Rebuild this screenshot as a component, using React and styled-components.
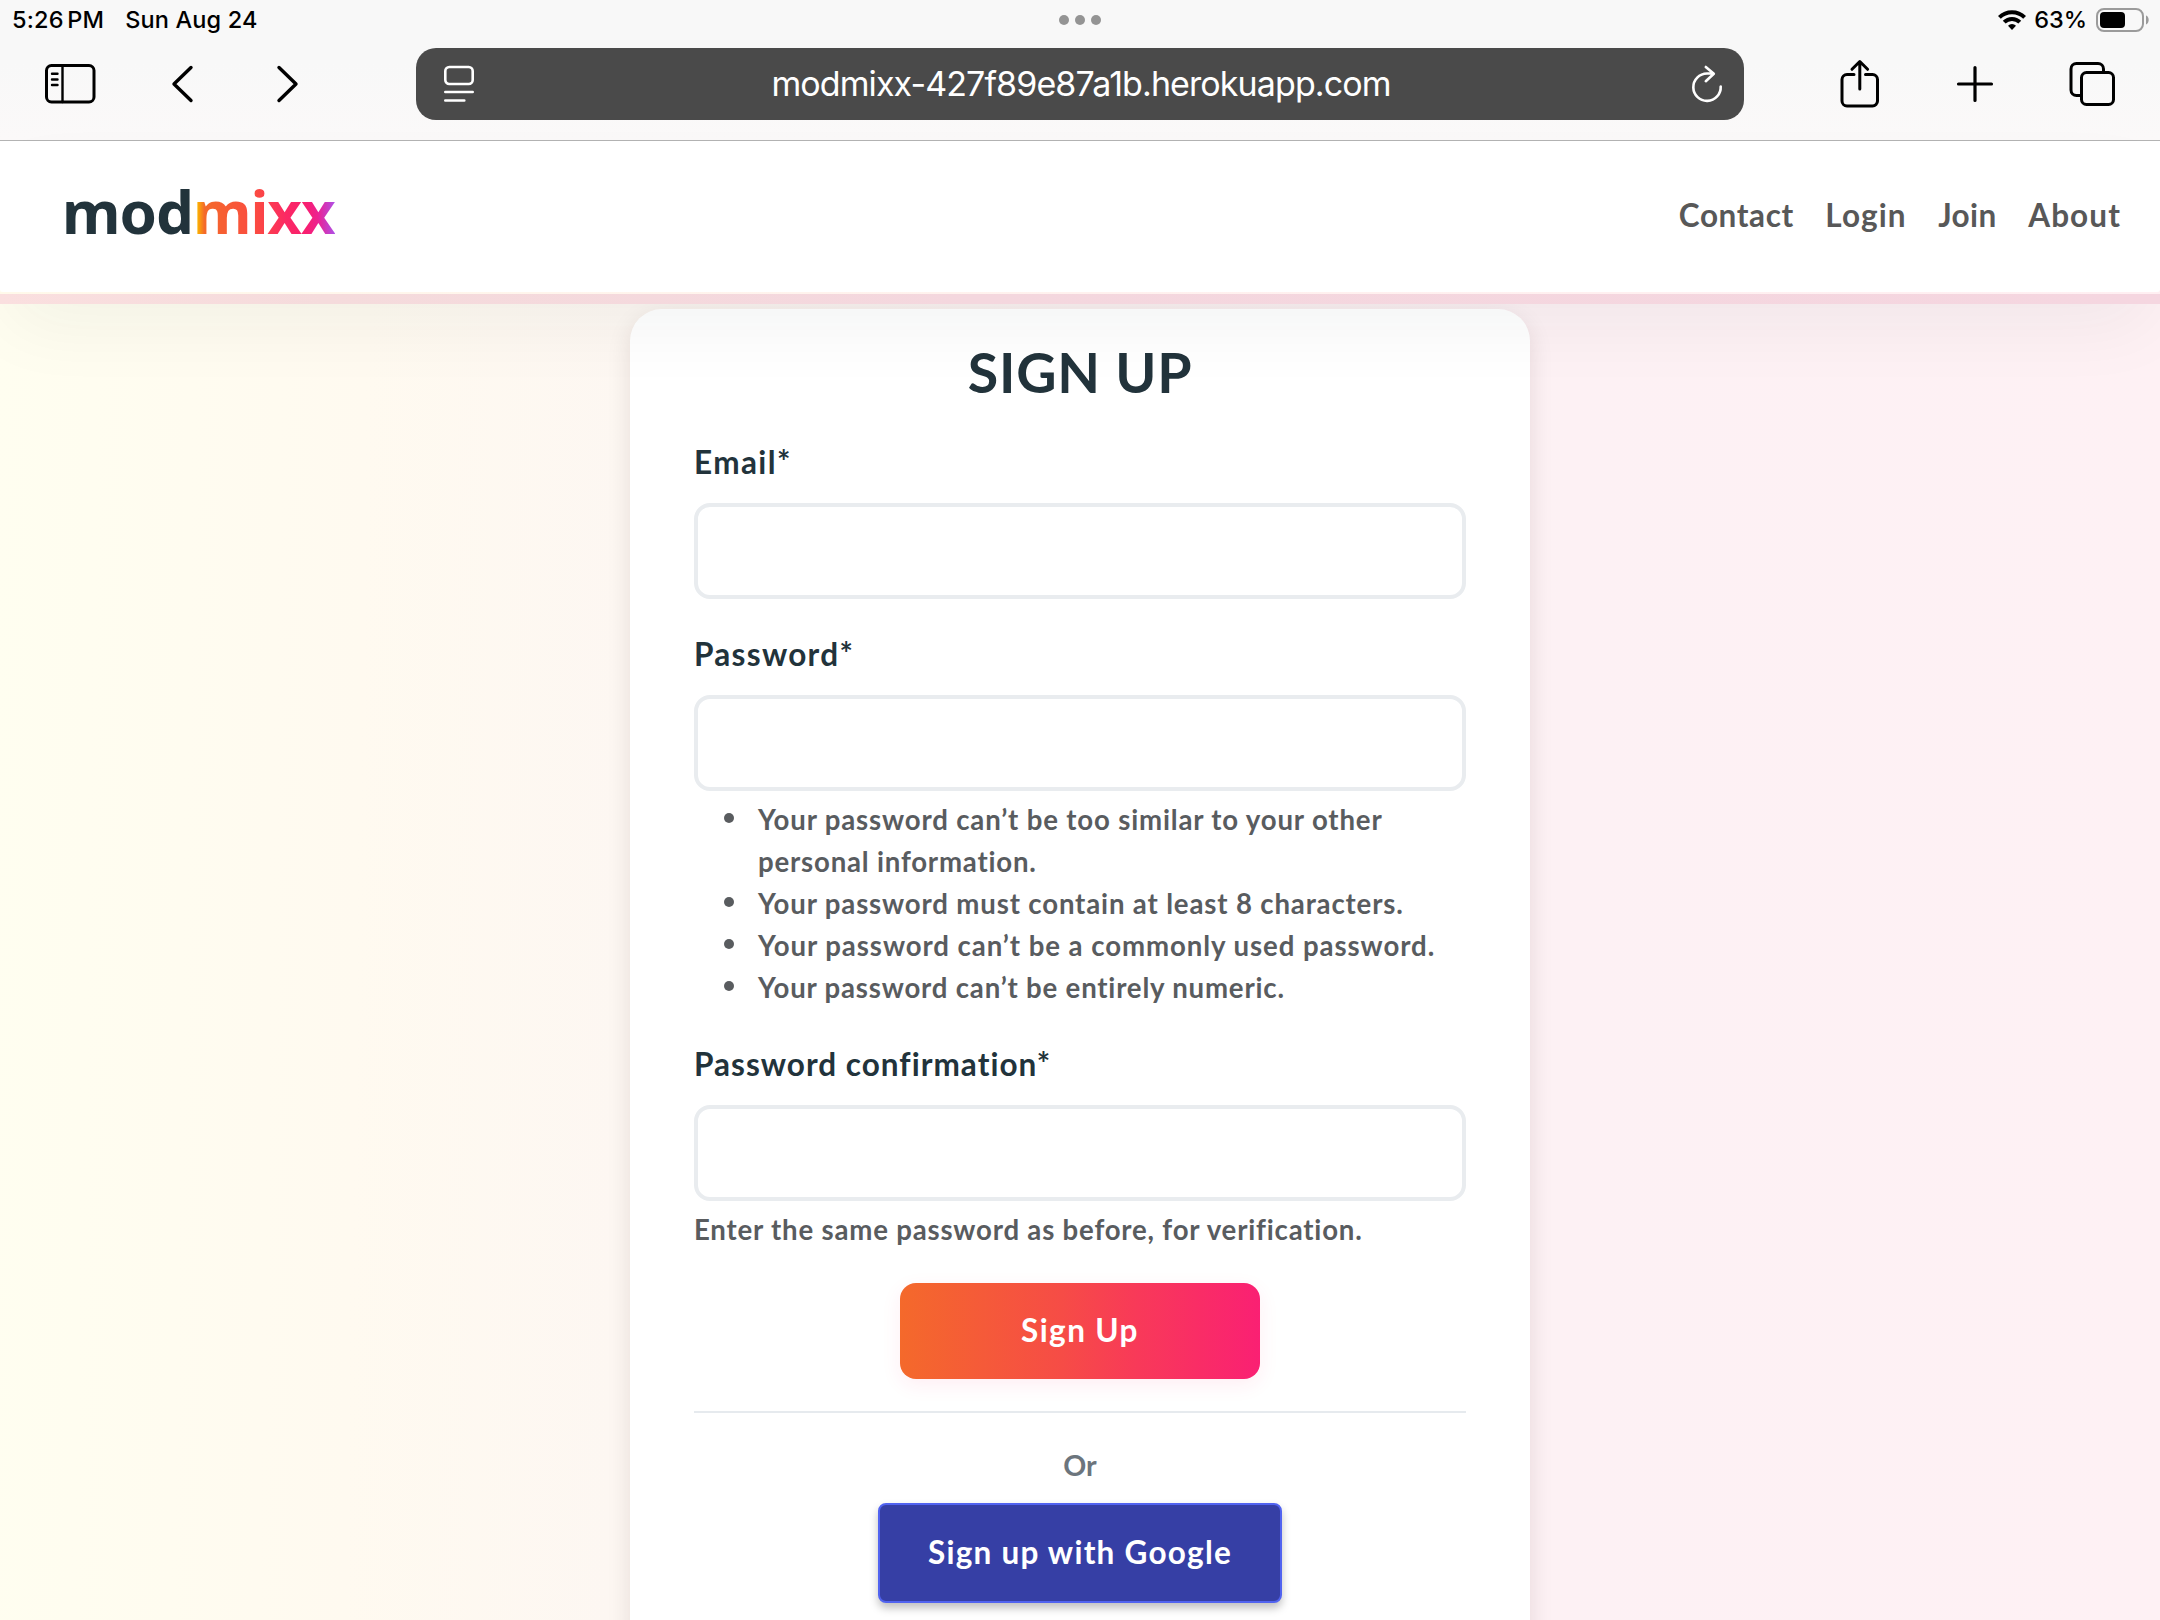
import React from "react";
import styled, { createGlobalStyle } from "styled-components";

const Global = createGlobalStyle`
  *, *::before, *::after { box-sizing: border-box; }
  html, body { margin: 0; padding: 0; overflow: hidden; }
  body { font-family: Lato, "Open Sans", sans-serif; background: #fff5f2; }
  input, button { font: inherit; }
`;

const Screen = styled.div`
  width: 2160px;
  height: 1620px;
  overflow: hidden;
  display: flex;
  flex-direction: column;
  background: linear-gradient(91deg, #fffef0 0%, #fffcf0 9%, #fffaf0 17%, #fdf7f2 29%, #fdf3f3 50%, #fdf1f4 72%, #fef1f4 100%);
`;

const Chrome = styled.header`
  flex: none;
  height: 141px;
  border-bottom: 1px solid #b3b3b3;
  background: linear-gradient(180deg, #f8f8f8 0%, #f8f8f8 45%, #fbf9f9 100%);
  font-family: Inter, sans-serif;
  color: #000;
`;

const StatusBar = styled.div`
  height: 40px;
  display: grid;
  grid-template-columns: 1fr auto 1fr;
  align-items: center;
  padding: 0 10px 0 10px;
  font-size: 23.5px;
  font-weight: 500;
  line-height: 40px;
`;

const StatusSide = styled.div`
  display: flex;
  align-items: center;
  justify-content: ${(p) => (p.$end ? "flex-end" : "flex-start")};
  padding-left: 2px;
  white-space: pre;
`;

const StatusText = styled.span`
  letter-spacing: ${(p) => p.$track || 0}px;
  word-spacing: ${(p) => p.$word || 0}px;
  margin-right: ${(p) => p.$gap || 0}px;
`;

const Dots = styled.div`
  display: flex;
  gap: 5.5px;
`;

const Dot = styled.i`
  width: 10.5px;
  height: 10.5px;
  border-radius: 50%;
  background: #949494;
`;

const Toolbar = styled.div`
  height: 88px;
  display: flex;
  align-items: center;
  padding: 0 44px;
`;

const ToolGroup = styled.div`
  display: flex;
  align-items: center;
  width: ${(p) => p.$w}px;
  justify-content: ${(p) => (p.$end ? "flex-end" : "flex-start")};
`;

const Icon = styled.svg`
  display: block;
  flex: none;
  fill: none;
  stroke: currentColor;
  stroke-linecap: ${(p) => (p.$butt ? "butt" : "round")};
  stroke-linejoin: round;
  stroke-width: ${(p) => p.$sw || 3};
  margin-left: ${(p) => p.$ml || 0}px;
  margin-right: ${(p) => p.$mr || 0}px;
`;

const AddressBar = styled.div`
  width: 1328px;
  height: 72px;
  border-radius: 20px;
  background: #4a4a4a;
  color: #fff;
  display: grid;
  grid-template-columns: 56px 1fr 56px;
  align-items: center;
`;

const Address = styled.span`
  padding-left: 2px;
  text-align: center;
  font-size: 34px;
  line-height: 72px;
  letter-spacing: ${(p) => p.$track}px;
`;

const Nav = styled.nav`
  position: relative;
  z-index: 2;
  flex: none;
  height: 163px;
  box-shadow: 0 32px 72px -10px rgba(20, 30, 34, 0.05);
`;

const NavBody = styled.div`
  height: 151px;
  background: #fff;
  border-radius: 0 0 3px 3px;
  display: flex;
  justify-content: space-between;
  padding: 0 39px 0 62px;
`;

const NavSeam = styled.div`
  height: 2px;
  background: linear-gradient(90deg, #fff9ea, #fff1ee 50%, #ffeff2);
`;

const NavRule = styled.div`
  height: 10px;
  background: linear-gradient(90deg, #fadfdf 0%, #f5dbdc 15%, #f4d7de 45%, #f5d6e0 100%);
`;

const Logo = styled.div`
  font-family: "Noto Sans", sans-serif;
  font-weight: 700;
  font-size: 60px;
  line-height: 82px;
  padding-top: 29px;
  letter-spacing: ${(p) => p.$track}px;
  color: #22333b;
`;

const LogoAccent = styled.span`
  display: inline-block;
  line-height: 82px;
  color: transparent;
  background: linear-gradient(90deg, #fbb400 3%, #f46a2a 8%, #fb4a42 45%, #fb2864 66%, #f81f70 80%, #ec2192 88%, #a855f0 101%);
  background-clip: text;
  -webkit-background-clip: text;
`;

const Links = styled.div`
  display: flex;
  gap: 31.5px;
  padding-top: 50px;
`;

const Link = styled.a`
  font-weight: 700;
  font-size: 31.5px;
  line-height: 48px;
  color: #585858;
  letter-spacing: ${(p) => p.$track}px;
`;

const Main = styled.main`
  flex: 1;
  min-height: 0;
  display: flex;
  justify-content: center;
  align-items: flex-start;
  padding-top: 5px;
`;

const Card = styled.form`
  flex: none;
  width: 900px;
  height: 1400px;
  padding: 33px 64px 0;
  background: #fff;
  border-radius: 32px;
  box-shadow: 0 8px 24px rgba(50, 20, 0, 0.11);
  display: flex;
  flex-direction: column;
`;

const Title = styled.h1`
  margin: 0 0 31px;
  text-align: center;
  font-weight: 700;
  font-size: 55.5px;
  line-height: 60px;
  color: #22333b;
  letter-spacing: ${(p) => p.$track}px;
`;

const Field = styled.div`
  display: flex;
  flex-direction: column;
  height: ${(p) => p.$h}px;
`;

const Label = styled.label`
  height: 70px;
  padding-top: 5px;
  font-weight: 700;
  font-size: 31.5px;
  line-height: 48px;
  color: #22333b;
  letter-spacing: ${(p) => p.$track}px;
`;

const Input = styled.input`
  width: 100%;
  height: 96px;
  border: 4px solid #e9ecef;
  border-radius: 16px;
  background: #fff;
  outline: none;
`;

const Help = styled.div`
  margin-top: 8px;
  font-weight: 700;
  font-size: 27.6px;
  line-height: 42px;
  color: #595c5f;
  white-space: nowrap;
  letter-spacing: ${(p) => p.$track}px;
`;

const Rules = styled.ul`
  margin: 8px 0 0;
  padding: 0;
  list-style: none;
`;

const Rule = styled.li`
  display: grid;
  grid-template-columns: 30px 1fr;
  padding-left: 30px;
  column-gap: 4px;
`;

const Bullet = styled.i`
  width: 10px;
  height: 10px;
  margin-top: 14px;
  border-radius: 50%;
  background: #595c5f;
`;

const RuleText = styled(Help)`
  margin-top: 0;
`;

const Submit = styled.button`
  align-self: center;
  width: 360px;
  height: 96px;
  padding: 0 0 2px;
  border: 0;
  border-radius: 16px;
  background: linear-gradient(90deg, #f4692b, #f64c46 45%, #f83a58 65%, #fa2073);
  color: #fff;
  font-weight: 700;
  font-size: 31.5px;
  letter-spacing: ${(p) => p.$track}px;
  box-shadow: 0 6px 20px rgba(251, 32, 100, 0.08);
`;

const Divider = styled.hr`
  width: 100%;
  height: 2px;
  margin: 32px 0 30px;
  border: 0;
  background: #e6eaee;
`;

const Or = styled.p`
  margin: 0 0 16px;
  text-align: center;
  font-weight: 700;
  font-size: 28.5px;
  line-height: 44px;
  color: #6c757d;
  letter-spacing: ${(p) => p.$track}px;
`;

const GoogleButton = styled.button`
  align-self: center;
  width: 404px;
  height: 100px;
  padding: 0 0 2px;
  border: 2px solid #5163f0;
  border-radius: 8px;
  background: #363fa5;
  color: #fff;
  font-weight: 700;
  font-size: 31.5px;
  letter-spacing: ${(p) => p.$track}px;
  box-shadow: 0 5px 9px rgba(0, 0, 0, 0.25);
`;

const links = [
  ["Contact", 0.6],
  ["Login", 1.1],
  ["Join", 0.4],
  ["About", 1.1],
];

const rules = [
  [["Your password can’t be too similar to your other", 0.83], ["personal information.", 0.8]],
  [["Your password must contain at least 8 characters.", 0.84]],
  [["Your password can’t be a commonly used password.", 0.93]],
  [["Your password can’t be entirely numeric.", 0.8]],
];

function WifiIcon() {
  return (
    <Icon width="28" height="20" viewBox="0 0 28 20" $sw={4} $mr={8} $butt>
      <path d="M1.400 7.400a18 18 0 0 1 25.200 0" />
      <path d="M6.200 12.200a11 11 0 0 1 15.600 0" />
      <path d="M14 20l-4-4.200a5.600 5.600 0 0 1 8 0z" fill="currentColor" stroke="none" />
    </Icon>
  );
}

function BatteryIcon() {
  return (
    <Icon width="54" height="24" viewBox="0 0 54 24" $sw={2} $ml={9}>
      <rect x="1" y="1" width="46" height="22" rx="7" stroke="#9b9b9b" />
      <rect x="4" y="4" width="25" height="16" rx="4" fill="#000" stroke="none" />
      <path d="M50 7.600c3.600 1 3.600 7.800 0 8.800z" fill="#9b9b9b" stroke="none" />
    </Icon>
  );
}

export default function App() {
  return (
    <Screen>
      <Global />
      <Chrome>
        <StatusBar>
          <StatusSide>
            <StatusText $track={0.2} $word={-3} $gap={21}>5:26 PM</StatusText>
            <StatusText $track={0.15}>Sun Aug 24</StatusText>
          </StatusSide>
          <Dots><Dot /><Dot /><Dot /></Dots>
          <StatusSide $end>
            <WifiIcon />
            <StatusText>63%</StatusText>
            <BatteryIcon />
          </StatusSide>
        </StatusBar>
        <Toolbar>
          <ToolGroup $w={372}>
            <Icon width="52" height="42" viewBox="0 0 52 42" $sw={3}>
              <rect x="2.500" y="2.500" width="47.500" height="36.500" rx="5" />
              <path d="M18.500 3v36M8 10.800h5.500M8 16.500h5.500M8 22h5.500" strokeWidth="2.400" />
            </Icon>
            <Icon width="24" height="40" viewBox="0 0 24 40" $sw={3.4} $ml={75}>
              <path d="M20 3.500L3 20l17 16.500" />
            </Icon>
            <Icon width="24" height="40" viewBox="0 0 24 40" $sw={3.4} $ml={80}>
              <path d="M4 3.500L21 20 4 36.500" />
            </Icon>
          </ToolGroup>
          <AddressBar>
            <Icon width="32" height="38" viewBox="0 0 32 38" $sw={2.6} $ml={27}>
              <rect x="2.300" y="2" width="27.400" height="17" rx="4" />
              <path d="M2.300 27h27.400M2.300 35.500h19" />
            </Icon>
            <Address $track={-0.9}>modmixx-427f89e87a1b.herokuapp.com</Address>
            <Icon width="32" height="38" viewBox="0 0 32 38" $sw={2.6} $ml={3}>
              <path d="M29.700 21.500A13.700 13.700 0 1 1 16 8.500h6.500M14.800 2l8 6.800-8 7.400" />
            </Icon>
          </AddressBar>
          <ToolGroup $w={372} $end>
            <Icon width="40" height="50" viewBox="0 0 40 50" $sw={3} $mr={75.5}>
              <path d="M14 15.500H7a5 5 0 0 0-5 5v21.500a5 5 0 0 0 5 5h25.500a5 5 0 0 0 5-5V20.500a5 5 0 0 0-5-5h-7" />
              <path d="M19.800 30V3M12 10.300L19.800 2.500l7.800 7.800" />
            </Icon>
            <Icon width="38" height="38" viewBox="0 0 38 38" $sw={3.2} $mr={74.5}>
              <path d="M19 2.500v33M2.500 19h33" />
            </Icon>
            <Icon width="48" height="46" viewBox="0 0 48 46" $sw={3}>
              <rect x="13.500" y="11.500" width="32" height="32" rx="5" />
              <path d="M13 34.500H8.500a5.500 5.500 0 0 1-5.500-5.500V8a5.500 5.500 0 0 1 5.500-5.500h21.500a5.500 5.500 0 0 1 5.500 5.500v3" />
            </Icon>
          </ToolGroup>
        </Toolbar>
      </Chrome>

      <Nav>
        <NavBody>
          <Logo $track={-1}>mod<LogoAccent>mixx</LogoAccent></Logo>
          <Links>
            {links.map(([name, track]) => (
              <Link key={name} $track={track}>{name}</Link>
            ))}
          </Links>
        </NavBody>
        <NavSeam />
        <NavRule />
      </Nav>

      <Main>
        <Card>
          <Title $track={0.8}>SIGN UP</Title>
          <Field $h={192}>
            <Label $track={1.4}>Email*</Label>
            <Input type="email" />
          </Field>
          <Field $h={410}>
            <Label $track={1.3}>Password*</Label>
            <Input type="password" />
            <Rules>
              {rules.map((lines) => (
                <Rule key={lines[0][0]}>
                  <Bullet />
                  <div>
                    {lines.map(([text, track]) => (
                      <RuleText key={text} $track={track}>{text}</RuleText>
                    ))}
                  </div>
                </Rule>
              ))}
            </Rules>
          </Field>
          <Field $h={248}>
            <Label $track={1.02}>Password confirmation*</Label>
            <Input type="password" />
            <Help $track={0.8}>Enter the same password as before, for verification.</Help>
          </Field>
          <Submit type="button" $track={1.4}>Sign Up</Submit>
          <Divider />
          <Or $track={0}>Or</Or>
          <GoogleButton type="button" $track={1.25}>Sign up with Google</GoogleButton>
        </Card>
      </Main>
    </Screen>
  );
}
